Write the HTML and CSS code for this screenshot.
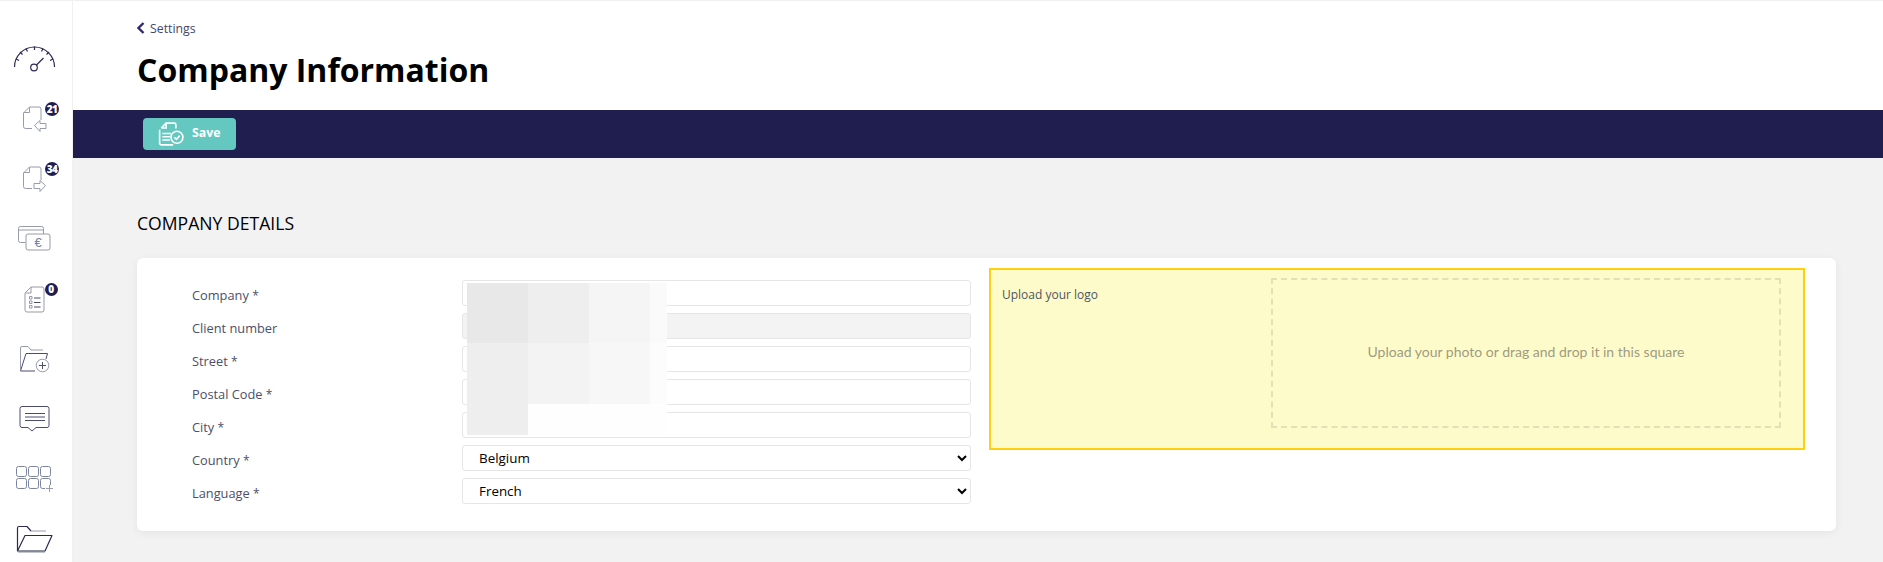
FILE: index.html
```html
<!DOCTYPE html>
<html lang="en">
<head>
<meta charset="utf-8">
<title>Company Information</title>
<link rel="stylesheet" href="styles.css">
</head>
<body>
<div class="app">
  <nav class="sidebar">
    <a class="nav-item"><svg class="ico" viewBox="0 0 72 36">
      <path class="dark" d="M14.500 21 A20 20 0 0 1 54.500 21"/>
      <path class="dark" d="M16 13l3 1.500M20 6l2.500 2.500M26 2.500l1.500 3M34.500 .5v3.500M43 2.500l-1.500 3M49 6l-2.500 2.500M53 13l-3 1.500"/>
      <circle class="dark" cx="34" cy="21.500" r="3.300"/>
      <path class="dark" d="M36.500 19l7-7"/>
    </svg></a>
    <a class="nav-item"><svg class="ico" viewBox="0 0 72 36">
      <path class="grey" d="M24 6.500L29.500 1H39q2 0 2 2v11M29.500 1v5.500H24M23.500 6.500V20.500q0 2 2 2H32"/>
      <path class="grey" d="M34.500 19.500l5.500-5v3h6v5h-6v3z"/>
    </svg><span class="badge">21</span></a>
    <a class="nav-item"><svg class="ico" viewBox="0 0 72 36">
      <path class="grey" d="M24 6.500L29.500 1H39q2 0 2 2v11M29.500 1v5.500H24M23.500 6.500V20.500q0 2 2 2H32"/>
      <path class="grey" d="M45.500 19.500l-5.500-5v3h-6v5h6v3z"/>
    </svg><span class="badge">34</span></a>
    <a class="nav-item"><svg class="ico" viewBox="0 0 72 36">
      <path class="grey" d="M25.500 16.500H20.500q-2 0-2-2V2.500q0-2 2-2h21q2 0 2 2v5.500M18.500 4h25"/>
      <rect class="grey" x="26" y="8" width="24" height="16" rx="2"/>
      <text class="euro" x="38" y="21" text-anchor="middle">€</text>
    </svg></a>
    <a class="nav-item"><svg class="ico" viewBox="0 0 72 36">
      <path class="grey" d="M25 7l6-6h11q2 0 2 2v21q0 2-2 2H27q-2 0-2-2zM31 1v6h-5"/>
      <path class="dark-thin" d="M34 12h6.500M34 16.500h6.500M34 21h6.500"/>
      <path class="grey-thin" d="M29.500 10.500h2.500v2.500h-2.500zM29.500 15h2.500v2.500h-2.500zM29.500 19.500h2.500v2.500h-2.500z"/>
    </svg><span class="badge badge-low">0</span></a>
    <a class="nav-item"><svg class="ico" viewBox="0 0 72 36">
      <path class="grey" d="M20.500 23V2q0-1.500 1.500-1.500h6l3 3.500H43"/>
      <path class="dark-thin" d="M35 25H20.500L26 7.500H47.500L46 13"/>
      <circle class="grey" cx="42.500" cy="19.500" r="6.300"/>
      <path class="dark-thin" d="M42.500 16v7M39 19.500h7"/>
    </svg></a>
    <a class="nav-item"><svg class="ico" viewBox="0 0 72 36">
      <path class="dark-thin" d="M22 .5H47q2 0 2 2v17q0 2-2 2H36l-4 3.500-4-3.500H22q-2 0-2-2v-17q0-2 2-2z"/>
      <path class="dark-thin" d="M25 7.500h20M25 11h20M25 14.500h20"/>
    </svg></a>
    <a class="nav-item"><svg class="ico" viewBox="0 0 72 36">
      <rect class="slate" x="16.500" y=".5" width="10" height="10" rx="2"/>
      <rect class="slate" x="28.500" y=".5" width="10" height="10" rx="2"/>
      <rect class="slate" x="40.500" y=".5" width="10" height="10" rx="2"/>
      <rect class="slate" x="16.500" y="12.500" width="10" height="10" rx="2"/>
      <rect class="slate" x="28.500" y="12.500" width="10" height="10" rx="2"/>
      <path class="slate" d="M45 22.500h-2.500q-2 0-2-2v-6q0-2 2-2h6q2 0 2 2V19"/>
      <path class="grey-thin" d="M49.500 19v7M46 22.500h7"/>
    </svg></a>
    <a class="nav-item"><svg class="ico" viewBox="0 0 72 36">
      <path class="dark" d="M17.500 25V2q0-1.500 1.500-1.500h8l4 4.500"/>
      <path class="grey" d="M31 5h15"/>
      <path class="dark" d="M17.500 25L25 9.500H52L45 25z"/>
      <path class="heavy" d="M18 25.500h27"/>
    </svg></a>
  </nav>

  <main class="main">
    <header class="page-head">
      <a class="back"><svg class="back-ico" viewBox="0 0 8 12"><path d="M6.500 1L1.500 6l5 5"/></svg>Settings</a>
      <h1>Company Information</h1>
    </header>
    <div class="toolbar">
      <button class="save" type="button">
        <svg class="save-ico" viewBox="0 0 24 22">
          <path d="M3 5.500L7.500 1H15q1.500 0 1.500 1.500V6M7.500 1v4.500H3M1.500 7v12.500q0 1.500 1.500 1.500h11"/>
          <path d="M4 10.500h8M4 13.500h7M4 16.500h7"/>
          <circle cx="17.500" cy="14" r="5.500"/>
          <path d="M15 14l2 2 3-3.500"/>
        </svg>
        <span>Save</span>
      </button>
    </div>
    <section class="content">
      <h2>COMPANY DETAILS</h2>
      <div class="card">
        <form class="fields">
          <label class="row"><span class="lbl">Company <span class="req">*</span></span><input class="ctl" type="text"></label>
          <label class="row"><span class="lbl">Client number</span><input class="ctl off" type="text" disabled></label>
          <label class="row"><span class="lbl">Street <span class="req">*</span></span><input class="ctl" type="text"></label>
          <label class="row"><span class="lbl">Postal Code <span class="req">*</span></span><input class="ctl" type="text"></label>
          <label class="row"><span class="lbl">City <span class="req">*</span></span><input class="ctl" type="text"></label>
          <label class="row"><span class="lbl">Country <span class="req">*</span></span><select class="ctl sel"><option>Belgium</option></select></label>
          <label class="row"><span class="lbl">Language <span class="req">*</span></span><select class="ctl sel"><option>French</option></select></label>
          <div class="blur" aria-hidden="true">
            <i class="b1"></i><i class="b2"></i><i class="b3"></i><i class="b4"></i>
            <i class="b5"></i><i class="b6"></i><i class="b7"></i><i class="b8"></i>
            <i class="b9"></i><i class="b10"></i><i class="b11"></i><i class="b12"></i>
          </div>
        </form>
        <div class="upload">
          <div class="up-label">Upload your logo</div>
          <div class="drop">Upload your photo or drag and drop it in this square</div>
        </div>
      </div>
    </section>
  </main>
</div>
</body>
</html>
```
FILE: styles.css
```css
* { box-sizing: border-box; }
html, body { margin: 0; height: 562px; overflow: hidden; background: #f2f2f2; }
body { font-family: "Open Sans", sans-serif; color: #000; }
.app { display: flex; height: 562px; border-top: 1px solid #f0f0f0; }

.sidebar { width: 72px; flex: none; background: #fff; padding-top: 45px; overflow: hidden; }
.nav-item { display: block; position: relative; height: 60px; }
.ico { display: block; width: 72px; height: 36px; overflow: visible; }
.ico path, .ico rect, .ico circle { fill: none; stroke-linejoin: round; }
.dark { stroke: #2b2a55; stroke-width: 1.2; }
.dark-thin { stroke: #4a4d70; stroke-width: 1; }
.grey { stroke: #979bab; stroke-width: 1; }
.grey-thin { stroke: #979bab; stroke-width: 1; }
.slate { stroke: #7d84a0; stroke-width: 1; }
.heavy { stroke: #858a90; stroke-width: 2; }
.euro { font-family: "Liberation Sans", sans-serif; font-size: 13px; fill: #7c8090; }
.badge {
  position: absolute; left: 45px; top: -4px;
  width: 14px; height: 14px; border-radius: 50%;
  background: #201d4f; color: #fff;
  font-size: 10px; font-weight: 800; line-height: 14px; text-align: center; letter-spacing: -.5px;
}
.badge-low { left: 44.500px; top: -3px; width: 13px; height: 13px; line-height: 13px; }

.main { flex: 1; min-width: 0; border-left: 1px solid #f0f0f0; }
.page-head { height: 109px; background: #fff; padding: 17px 0 0 64px; }
.back { display: flex; align-items: center; height: 20px; color: #45456b; font-size: 12.300px; }
.back-ico { width: 8px; height: 12px; margin-right: 5px; }
.back-ico path { fill: none; stroke: #2f2b6b; stroke-width: 2.400; }
h1 { margin: 10px 0 0; font-size: 32px; font-weight: 700; line-height: 44px; color: #000; }

.toolbar { height: 48px; background: #201d4f; padding: 8px 0 0 70px; }
.save {
  display: flex; align-items: center; width: 93px; height: 32px; padding: 0 0 4px 15px;
  border: 0; border-radius: 4px; background: #64c8c0; color: #fff;
  font: 700 12.300px "Open Sans", sans-serif;
}
.save-ico { width: 26px; height: 24px; margin-top: 3px; margin-right: 8px; }
.save-ico path, .save-ico circle { fill: none; stroke: #fff; stroke-width: 1.500; }

.content { padding: 52px 47px 0 64px; }
h2 { margin: 0 0 22px; font-size: 17.600px; font-weight: 400; line-height: 26px; color: #000; }
.card {
  display: flex; height: 273px; padding: 10px 31px 0 0;
  background: #fff; border-radius: 6px; box-shadow: 0 2px 10px rgba(0, 0, 0, .06);
}
.fields { position: relative; width: 834px; flex: none; padding: 12px 0 0 55px; }
.row { display: flex; align-items: center; height: 26px; margin-bottom: 7px; }
.lbl { width: 270px; flex: none; padding-top: 3px; color: #4d4f68; font-size: 12.800px; }
.req { font-size: 12px; }
.ctl {
  width: 509px; height: 26px; padding: 0 12px; background: #fff; color: #000;
  border: 1px solid #e6e6e6; border-radius: 3px; font: 13.400px "Open Sans", sans-serif; outline: 0;
}
.off { background: #f3f3f3; }
.blur {
  position: absolute; left: 330px; top: 15px;
  display: grid; grid-template-columns: 61px 61px 61px 17px; grid-template-rows: 60px 61px 31px;
}
.b1 { background: #e8e8e8; } .b2 { background: #eeeeee; } .b3 { background: #f5f5f5; } .b4 { background: #fafafa; }
.b5 { background: #eeeeee; } .b6 { background: #f3f3f3; } .b7 { background: #f7f7f7; } .b8 { background: #fcfcfc; }
.b9 { background: #eeeeee; } .b10 { background: #fefefe; } .b11 { background: #fefefe; } .b12 { background: #fefefe; }

.upload {
  display: flex; justify-content: space-between; align-items: flex-start; margin-left: 18px;
  width: 816px; height: 182px; padding: 8px 22px 0 11px;
  background: #fefbca; border: 2px solid #ffcf10;
}
.up-label { padding-top: 8px; color: #4f5560; font-size: 12px; }
.drop {
  display: flex; align-items: center; justify-content: center; width: 510px; height: 150px; padding-bottom: 4px;
  border: 2px dashed #e2e0b6; color: #9e9c80; font: 14px Lato, sans-serif;
}
```
